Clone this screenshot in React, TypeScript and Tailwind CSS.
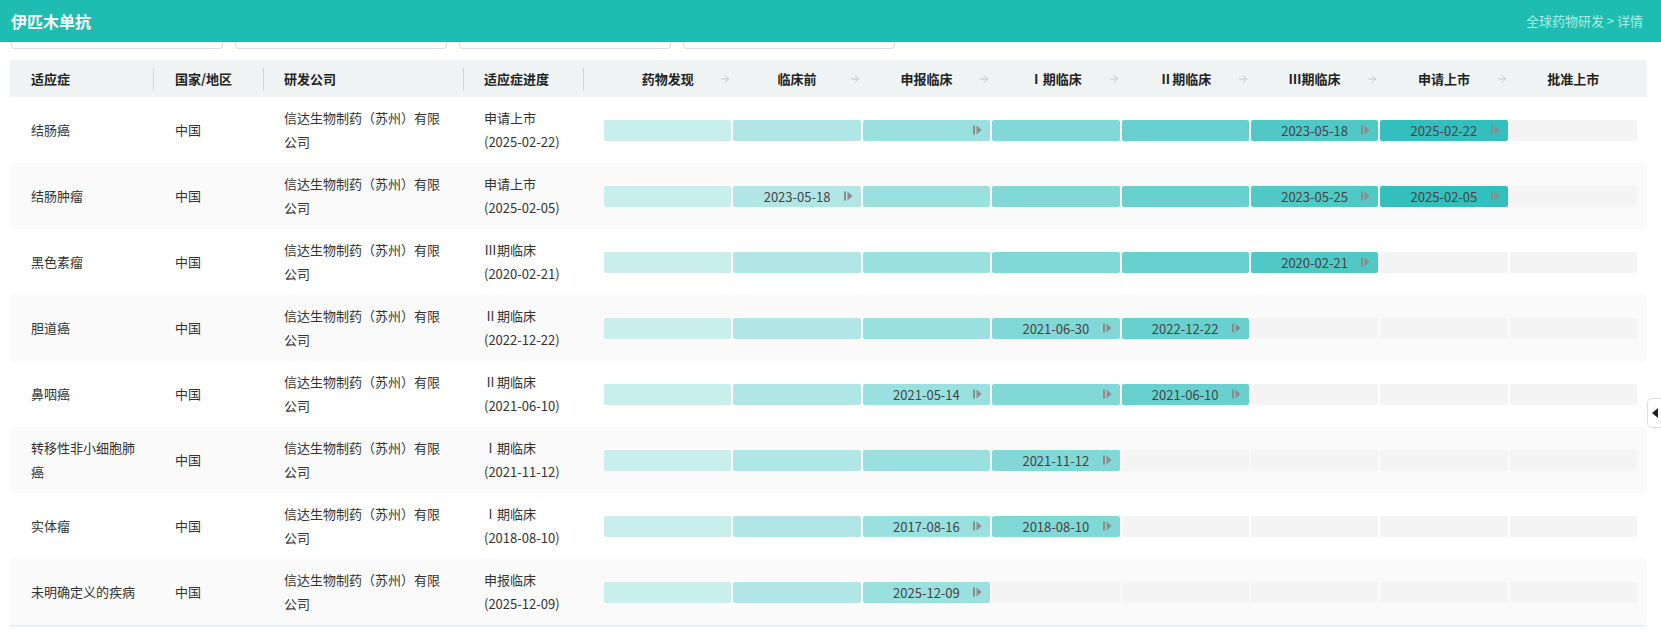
import React from 'react';
import { ArrowRight } from 'lucide-react';

const phases = ['药物发现', '临床前', '申报临床', 'Ⅰ期临床', 'Ⅱ期临床', 'Ⅲ期临床', '申请上市', '批准上市'];

const barColors = [
  'bg-[#c9eeee]',
  'bg-[#b1e6e6]',
  'bg-[#9ae0df]',
  'bg-[#81d8d7]',
  'bg-[#68d1cf]',
  'bg-[#4fc8c6]',
  'bg-[#33bfbd]',
  'bg-[#1fb7b4]',
];

interface Row {
  name: string;
  company: string;
  stage: string;
  date: string;
  filled: number;
  marks: Record<number, string>;
}

const rows: Row[] = [
  { name: '结肠癌', company: '信达生物制药（苏州）有限公司', stage: '申请上市', date: '2025-02-22', filled: 7, marks: { 3: '', 6: '2023-05-18', 7: '2025-02-22' } },
  { name: '结肠肿瘤', company: '信达生物制药（苏州）有限公司', stage: '申请上市', date: '2025-02-05', filled: 7, marks: { 2: '2023-05-18', 6: '2023-05-25', 7: '2025-02-05' } },
  { name: '黑色素瘤', company: '信达生物制药（苏州）有限公司', stage: 'Ⅲ期临床', date: '2020-02-21', filled: 6, marks: { 6: '2020-02-21' } },
  { name: '胆道癌', company: '信达生物制药（苏州）有限公司', stage: 'Ⅱ期临床', date: '2022-12-22', filled: 5, marks: { 4: '2021-06-30', 5: '2022-12-22' } },
  { name: '鼻咽癌', company: '信达生物制药（苏州）有限公司', stage: 'Ⅱ期临床', date: '2021-06-10', filled: 5, marks: { 3: '2021-05-14', 4: '', 5: '2021-06-10' } },
  { name: '转移性非小细胞肺癌', company: '信达生物制药（苏州）有限公司', stage: 'Ⅰ期临床', date: '2021-11-12', filled: 4, marks: { 4: '2021-11-12' } },
  { name: '实体瘤', company: '信达生物制药（苏州）有限公司', stage: 'Ⅰ期临床', date: '2018-08-10', filled: 4, marks: { 3: '2017-08-16', 4: '2018-08-10' } },
  { name: '未明确定义的疾病', company: '信达生物制药（苏州）有限公司', stage: '申报临床', date: '2025-12-09', filled: 3, marks: { 3: '2025-12-09' } },
];

const cols = 'grid grid-cols-[143px_110px_200px_120px_1fr]';

const StepIcon = () => (
  <svg width="9" height="10" viewBox="0 0 9 10" className="absolute right-[8px] top-1/2 -translate-y-1/2" aria-hidden="true">
    <rect x="0" y="0.5" width="2" height="9" fill="#8c8c8c" />
    <path d="M3.5 0.5 L8.5 5 L3.5 9.5 Z" fill="#8c8c8c" />
  </svg>
);

const Bar: React.FC<{ index: number; row: Row }> = ({ index, row }) => {
  const filled = index < row.filled;
  const mark = row.marks[index + 1];
  return (
    <div className={`relative h-[21px] rounded-[2px] flex items-center justify-center ${filled ? barColors[index] : 'bg-[#f4f4f4]'}`}>
      {mark ? <span className="text-[13px] leading-none text-[#444]">{mark}</span> : null}
      {mark !== undefined ? <StepIcon /> : null}
    </div>
  );
};

const Divider = () => <span className="absolute left-0 top-1/2 -translate-y-1/2 h-[23px] w-px bg-[#cfd5d8]" />;

export default function App() {
  return (
    <div className="relative w-[1661px] h-[642px] bg-white font-['Noto_Sans_CJK_SC','Noto_Sans',sans-serif] overflow-hidden">
      <div className="h-[42px] bg-[#1fbdb1] flex items-center justify-between pl-[11px] pr-[18px]">
        <span className="text-white text-[16px] font-bold">伊匹木单抗</span>
        <span className="text-[#a9ede5] text-[13px]">全球药物研发 &gt; 详情</span>
      </div>

      <div className="flex gap-[12px] pl-[11px]">
        {[0, 1, 2, 3].map((i) => (
          <div key={i} className="w-[212px] h-[7px] border-x border-b border-[#dcdfe6] rounded-b-[4px]" />
        ))}
      </div>

      <div className="ml-[10px] w-[1637px] mt-[11px]">
        <div className={`${cols} h-[37px] bg-[#eff3f4] text-[13px] font-bold text-[#222] items-center`}>
          <div className="pl-[21px]">适应症</div>
          <div className="relative pl-[22px] h-full flex items-center"><Divider />国家/地区</div>
          <div className="relative pl-[21px] h-full flex items-center"><Divider />研发公司</div>
          <div className="relative pl-[21px] h-full flex items-center"><Divider />适应症进度</div>
          <div className="relative pl-[21px] pr-[10px] h-full flex items-center">
            <Divider />
            <div className="grid grid-cols-8 gap-[2px] w-full">
              {phases.map((p, i) => (
                <div key={p} className="relative flex justify-center items-center">
                  <span>{p}</span>
                  {i < 7 ? (
                    <ArrowRight size={12} strokeWidth={2} className="absolute right-0 text-[#c3c8cc]" />
                  ) : null}
                </div>
              ))}
            </div>
          </div>
        </div>

        {rows.map((row, r) => (
          <div
            key={row.name}
            className={`${cols} h-[66px] items-center text-[13px] leading-[24px] text-[#333] rounded-[4px] ${r % 2 === 1 ? 'bg-[#fafafa]' : 'bg-white'}`}
          >
            <div className="pl-[21px] pr-[12px]">{row.name}</div>
            <div className="pl-[22px]">中国</div>
            <div className="pl-[21px] pr-[20px]">{row.company}</div>
            <div className="pl-[21px]">
              <div>{row.stage}</div>
              <div>({row.date})</div>
            </div>
            <div className="pl-[21px] pr-[10px] grid grid-cols-8 gap-[2px]">
              {phases.map((p, i) => (
                <Bar key={p} index={i} row={row} />
              ))}
            </div>
          </div>
        ))}
        <div className="h-[2px] bg-[#ebeef5]" />
      </div>

      <div className="absolute right-0 top-[398px] w-[14px] h-[30px] bg-white border border-r-0 border-[#dcdfe6] rounded-l-[5px] flex items-center justify-center">
        <svg width="6" height="10" viewBox="0 0 6 10" aria-hidden="true">
          <path d="M6 0 L0 5 L6 10 Z" fill="#222" />
        </svg>
      </div>
    </div>
  );
}
